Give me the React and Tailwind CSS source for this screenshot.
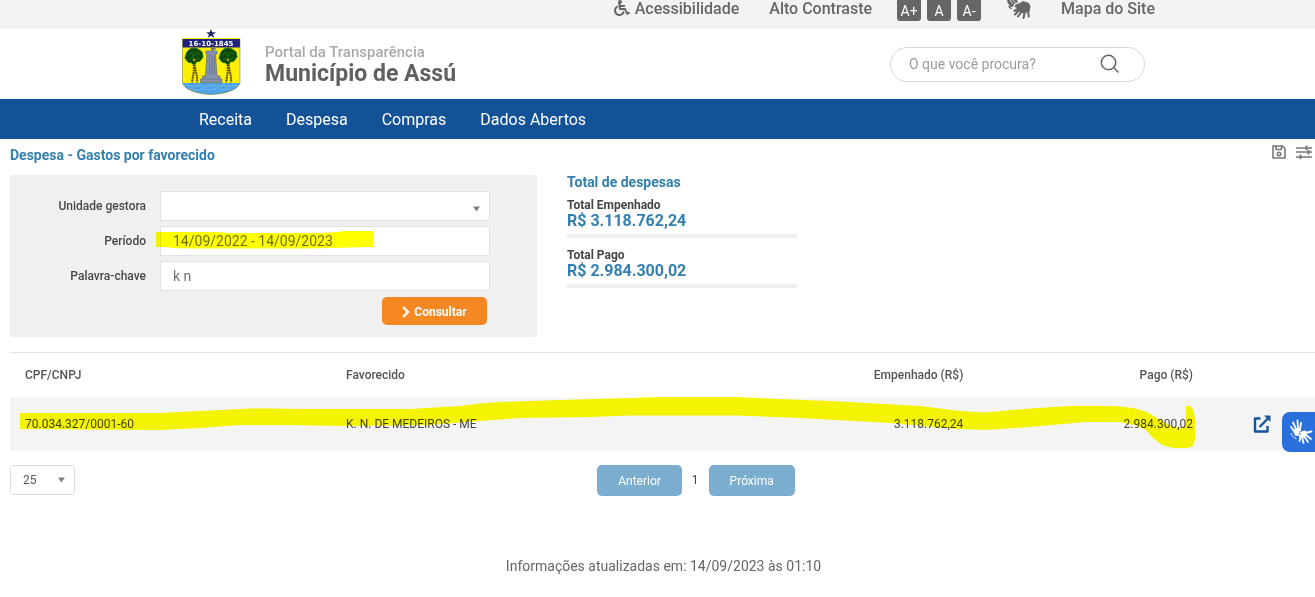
import { FaWheelchair } from "react-icons/fa";

const CREST_TREES = [194, 228];

function Crest() {
  return (
    <svg viewBox="182 29 59 66" className="h-[66px] w-[59px] shrink-0" role="img" aria-label="Brasão do Município de Assú">
      <defs>
        <clipPath id="shield">
          <path d="M182.500 38H240v45c-2 6-12 11-28.500 11.500C195 94 184.500 89 182.500 83Z" />
        </clipPath>
      </defs>
      <path d="M211 29l1.300 3.200h3.700l-2.900 2.100 1.100 3.500-3.200-2.100-3.200 2.100 1.100-3.500-2.900-2.100h3.700Z" fill="#1d2b66" />
      <g clipPath="url(#shield)">
        <rect x="182" y="38" width="59" height="57" fill="#fcf000" />
        <rect x="182" y="39" width="59" height="8.500" fill="#20237c" />
        <rect x="182" y="83" width="59" height="12" fill="#4da3e6" />
        <path d="M184 86q3-1.500 6 0t6 0 6 0 6 0 6 0 6 0 6 0 6 0 6 0M188 89.500q3-1.500 6 0t6 0 6 0 6 0 6 0 6 0 6 0" fill="none" stroke="#80c0f0" strokeWidth="0.700" />
        {CREST_TREES.map((x) => (
          <g key={x}>
            <path d={`M${x - 1} 62c2 7 0 14-1 20.500M${x + 1} 62c-1 7 3 13 2 20.500`} fill="none" stroke="#6b5520" strokeWidth="2" strokeDasharray="2 0.500" />
            <path d={`M${x - 7} 52l3-3 4-1 4 1 4 3 1 5-3 4-4 1-2 3-2-2-4-1-3-4Z`} fill="#0c4a0c" stroke="#1c6b14" strokeWidth="1" />
            <path d={`M${x - 5} 55l3-3 2 4 3-4 3 3M${x - 4} 60l3-3 3 3 3-3`} fill="none" stroke="#2c7a1c" strokeWidth="0.700" />
            <circle cx={x} cy="60" r="1.300" fill="#b89a1c" />
          </g>
        ))}
        <path d="M206 51h11v3h-1.500l1.500 22h3v3h2v3.500h-21.500V79h2v-3h3l1.500-22h-1Z" fill="#8793ae" stroke="#4f5d80" strokeWidth="0.600" />
        <path d="M209.500 55v20M212 55v20M214.300 55v20M203 79h17" stroke="#56658c" strokeWidth="0.600" />
        <path d="M211 51v-3h5l-1 2Z" fill="#6b7896" />
      </g>
      <path d="M182.500 39V83c2 6 12.500 11 29 11.500C228 94 238 89 240 83V39" fill="none" stroke="#776f2e" strokeWidth="0.500" />
      <text x="211" y="46" textAnchor="middle" fontSize="7" fontWeight="700" fontFamily="DejaVu Sans, sans-serif" fill="#fff">16-10-1845</text>
    </svg>
  );
}

function SaveIcon() {
  return (
    <svg viewBox="0 0 14 14" className="size-[14px]" fill="none" stroke="#777" strokeWidth="1.600" strokeLinejoin="round" aria-hidden="true">
      <path d="M1 1h9.500L13 3.500V13H1ZM4 1v3.500h5.500V1" />
      <circle cx="7" cy="9" r="1.700" />
    </svg>
  );
}

function SlidersIcon() {
  return (
    <svg viewBox="0 0 16 14" className="h-[14px] w-4" stroke="#777" strokeWidth="2" aria-hidden="true">
      <path d="M0 3h16M0 7h16M0 12h16" strokeWidth="1.600" />
      <path d="M10.500 0.500v4.500M12.500 5v4.500M4.500 9.500V14" />
    </svg>
  );
}

function OpenIcon() {
  return (
    <svg viewBox="0 0 18 18" className="size-[18px]" fill="none" stroke="#15569b" strokeWidth="2.400" strokeLinejoin="round" aria-hidden="true">
      <path d="M7.500 3.500H2v13h12.500V11M6.500 12 15 3.500" />
      <path d="M11 0.500h6.500V7Z" fill="#15569b" stroke="none" />
    </svg>
  );
}

function SignLanguageIcon() {
  return (
    <svg viewBox="0 0 26 20" className="h-5 w-[26px]" fill="none" strokeLinecap="round" strokeLinejoin="round" aria-hidden="true">
      <path d="M1 0h10l1 2-4 2-1 3-3-1Z" fill="#666" />
      <path d="M2 2l3 4M5 8.500l-2-2" stroke="#666" strokeWidth="1.600" />
      <path d="M4 0l2.500 3.500M7 0l2 2.500" stroke="#f3f3f3" strokeWidth="0.800" />
      <path d="M9.500 4.500 14 3l3-2 6 2 1.500 3.500-1 5-6 2-5-2.500-4.500 1-1-1.500 4-2.500-2.500-1Z" fill="#666" />
      <path d="M13 10.500l-4 4M16 11l-4 5.500M19 11l-1.500 7M22 10l.7 6.500" stroke="#666" strokeWidth="2.100" />
    </svg>
  );
}

function HandsIcon() {
  return (
    <svg viewBox="0 0 24 26" className="h-[26px] w-6" fill="none" stroke="#fff" strokeLinecap="round" strokeLinejoin="round" aria-hidden="true">
      <path d="M5 12 2 8M7 10 4 3.500M9 9.500 8.500 1.500M11 10.500 12 4" strokeWidth="1.800" />
      <path d="M4.500 11.500 9 9l3 2-2.500 2 .5 3-3 .5Z" fill="#fff" strokeWidth="1" />
      <path d="M2 14.500c1 3 3 4.500 5 5" strokeWidth="1" />
      <path d="M16 14l6.500-1.500M17 16l5 4M15 17l4 6M13 18l1.500 6M11.500 17.500 10.500 22" strokeWidth="1.800" />
      <path d="M11 13.500l5-1.500 2 3-2.500 3-4 1-1-2.500 3-1.500Z" fill="#fff" strokeWidth="1.200" />
    </svg>
  );
}

function Caret({ className }) {
  return (
    <svg viewBox="0 0 7 6" className={`pointer-events-none absolute h-[6px] w-[7px] ${className}`} aria-hidden="true">
      <path d="M0 0.500h7L3.500 5.500Z" fill="#808080" />
    </svg>
  );
}

function Total({ label, value }) {
  return (
    <div className="mb-[9px] border-b-4 border-[#f0f0f0] pb-[5px]">
      <dt className="text-xs leading-4 font-bold text-[#444]">{label}</dt>
      <dd className="text-base leading-4 font-bold text-[#337fae]">{value}</dd>
    </div>
  );
}

const fieldClass =
  "h-[30px] w-full appearance-none border border-[#e2e2e2] bg-white px-3 text-sm text-[#707070] outline-none";
const labelClass = "text-right text-xs font-medium text-[#484848]";
const sizeClass = "h-[21px] w-6 rounded-b-[3px] bg-[#666] text-sm leading-[18px] font-normal text-white";
const pageClass = "h-[31px] rounded-[5px] bg-[#7badce] px-[21px] text-xs text-white";

export default function App() {
  return (
    <div className="min-h-screen bg-white font-[Roboto,sans-serif] text-[#444]">
      <div className="h-[29px] overflow-hidden bg-[#f3f3f3] pl-3">
        <div className="mx-auto flex max-w-[983px] items-start justify-end text-base leading-[17px] font-medium text-[#666]">
          <a href="#acessibilidade" className="flex items-start gap-[5px]">
            <FaWheelchair className="size-4" />
            Acessibilidade
          </a>
          <a href="#contraste" className="ml-[30px]">Alto Contraste</a>
          <div className="ml-[25px] flex gap-[6px]">
            <button type="button" className={sizeClass}>A+</button>
            <button type="button" className={sizeClass}>A</button>
            <button type="button" className={sizeClass}>A-</button>
          </div>
          <a href="#libras" aria-label="Libras" className="ml-[25px]">
            <SignLanguageIcon />
          </a>
          <a href="#mapa" className="ml-[29px]">Mapa do Site</a>
        </div>
      </div>

      <header className="h-[70px] pl-3">
        <div className="mx-auto flex max-w-[963px] items-start justify-between">
          <a href="#inicio" className="flex gap-6">
            <Crest />
            <span className="flex flex-col pt-[13px]">
              <span className="text-[15px] leading-5 font-medium text-[#aaa]">Portal da Transparência</span>
              <span className="text-[23px] leading-6 font-bold text-[#606060]">Município de Assú</span>
            </span>
          </a>
          <form className="mt-[18px] flex h-[35px] w-[255px] items-center justify-between rounded-full border border-[#d8d8d8] pr-6 pb-[2px] pl-[18px]">
            <input
              type="search"
              aria-label="Pesquisar"
              placeholder="O que você procura?"
              className="w-40 bg-transparent text-sm outline-none placeholder:text-[#9b9b9b]"
            />
            <button type="button" aria-label="Buscar">
              <svg viewBox="0 0 20 20" className="size-5" fill="none" stroke="#666" strokeWidth="1.500">
                <circle cx="8.500" cy="8.500" r="7.200" />
                <path d="m13.800 13.800 4.700 4.700" />
              </svg>
            </button>
          </form>
        </div>
      </header>

      <nav className="bg-[#135297] pl-3">
        <div className="mx-auto flex h-10 max-w-[963px] items-center gap-[34px] px-[17px] pt-[2px] text-base text-white">
          <a href="#receita">Receita</a>
          <a href="#despesa">Despesa</a>
          <a href="#compras">Compras</a>
          <a href="#dados">Dados Abertos</a>
        </div>
      </nav>

      <main className="pl-[10px]">
        <div className="flex h-9 items-start justify-between pt-[6px] pr-[3px]">
          <h1 className="text-sm leading-5 font-bold text-[#337fae]">Despesa - Gastos por favorecido</h1>
          <div className="flex gap-[10px]">
            <button type="button" aria-label="Salvar"><SaveIcon /></button>
            <button type="button" aria-label="Filtros"><SlidersIcon /></button>
          </div>
        </div>

        <div className="flex gap-[30px]">
          <form className="relative w-[527px] rounded-[2px] bg-[#f0f0f0] pt-4 pb-3">
            <div className="grid grid-cols-[136px_330px] items-center gap-x-[14px] gap-y-[5px]">
              <label htmlFor="unidade" className={labelClass}>Unidade gestora</label>
              <div className="relative">
                <select id="unidade" defaultValue="" className={`${fieldClass} block`}>
                  <option value=""></option>
                </select>
                <Caret className="top-[15px] right-[10px]" />
              </div>
              <label htmlFor="periodo" className={labelClass}>Período</label>
              <input id="periodo" type="text" defaultValue="14/09/2022 - 14/09/2023" className={fieldClass} />
              <label htmlFor="palavra" className={labelClass}>Palavra-chave</label>
              <input id="palavra" type="text" defaultValue="k n" className={fieldClass} />
            </div>
            <div className="mt-[6px] flex justify-end pr-[50px]">
              <button type="button" className="flex h-7 w-[105px] items-center justify-center gap-1 rounded-[5px] bg-[#f58823] pt-px text-xs font-bold text-white">
                <svg viewBox="0 0 8 12" className="h-3 w-2" fill="none" stroke="#fff" strokeWidth="2.400" aria-hidden="true">
                  <path d="M1.200 1.200 6 6 1.200 10.800" />
                </svg>
                Consultar
              </button>
            </div>
            <svg viewBox="0 0 217 19" className="pointer-events-none absolute top-[55px] left-[146px] h-[19px] w-[217px] mix-blend-multiply" aria-hidden="true">
              <path d="M0 2H62L72 3H165L182 2 188 1H217V17L174 18 150 18.500H40L16 18 11 17H0Z" fill="#ff0" />
            </svg>
          </form>

          <section className="w-[230px]">
            <h2 className="mb-2 text-sm leading-[14px] font-bold text-[#337fae]">Total de despesas</h2>
            <dl>
              <Total label="Total Empenhado" value="R$ 3.118.762,24" />
              <Total label="Total Pago" value="R$ 2.984.300,02" />
            </dl>
          </section>
        </div>

        <div className="relative mt-[15px] border-t border-[#e4e4e4]">
          <table className="w-full table-fixed text-xs">
            <colgroup>
              <col className="w-[24.6%]" />
              <col />
              <col className="w-[20%]" />
              <col className="w-[17.6%]" />
              <col className="w-[8.2%]" />
            </colgroup>
            <thead>
              <tr className="h-[45px] text-left text-[#555]">
                <th className="px-[15px] pb-[2px] font-medium">CPF/CNPJ</th>
                <th className="px-[15px] pb-[2px] font-medium">Favorecido</th>
                <th className="px-[15px] pb-[2px] text-right font-medium">Empenhado (R$)</th>
                <th className="px-[15px] pb-[2px] text-right font-medium">Pago (R$)</th>
                <th aria-label="Detalhes"></th>
              </tr>
            </thead>
            <tbody>
              <tr className="h-[52px] bg-[#f4f4f4] text-[#444]">
                <td className="px-[15px]">70.034.327/0001-60</td>
                <td className="px-[15px]">K. N. DE MEDEIROS - ME</td>
                <td className="px-[15px] text-right">3.118.762,24</td>
                <td className="px-[15px] text-right">2.984.300,02</td>
                <td>
                  <a href="#detalhes" aria-label="Abrir detalhes" className="flex justify-center"><OpenIcon /></a>
                </td>
              </tr>
            </tbody>
          </table>
          <svg viewBox="10 353 1305 97" preserveAspectRatio="none" className="pointer-events-none absolute inset-0 h-full w-full mix-blend-multiply" aria-hidden="true">
            <path
              d="M20 413H160L200 411 250 408.500H275L300 409H410L460 406 480 403.500 500 402 560 400 630 398 660 397H735L780 399 830 401 920 406 960 411 985 412.500 1030 408.500 1070 406H1115L1133 408 1147 412 1160 420 1173 427 1183 428 1186 424V406H1191L1194 412 1195 420V440L1193 446 1187 448H1173L1162 445 1153 438 1146 430 1135 425 1118 422H1085L1030 427 985 430 950 428.500 890 423 800 418 735 415.500H630L590 417 520 418 480 421 430 425 340 426 290 425H240L200 428 160 430 20 429Z"
              fill="#ff0"
            />
          </svg>
          <button type="button" aria-label="Conteúdo acessível em Libras" className="absolute top-[59px] right-0 flex h-10 w-[33px] items-center justify-center rounded-l-lg bg-[#2a70dc] pl-1">
            <HandsIcon />
          </button>
        </div>

        <div className="mt-[15px] flex items-start">
          <div className="relative w-[65px]">
            <select aria-label="Registros por página" defaultValue="25" className="h-[30px] w-full appearance-none rounded-[4px] border border-[#ddd] bg-white px-3 text-xs text-[#555] outline-none">
              <option value="25">25</option>
            </select>
            <Caret className="top-[12px] right-[10px]" />
          </div>
          <div className="flex flex-1 justify-center gap-[10px] pl-[2px]">
            <button type="button" className={pageClass}>Anterior</button>
            <span className="text-xs leading-[30px]">1</span>
            <button type="button" className={pageClass}>Próxima</button>
          </div>
        </div>
      </main>

      <footer className="mt-[60px] pl-3 text-center text-sm leading-5 text-[#666]">
        Informações atualizadas em: 14/09/2023 às 01:10
      </footer>
    </div>
  );
}
